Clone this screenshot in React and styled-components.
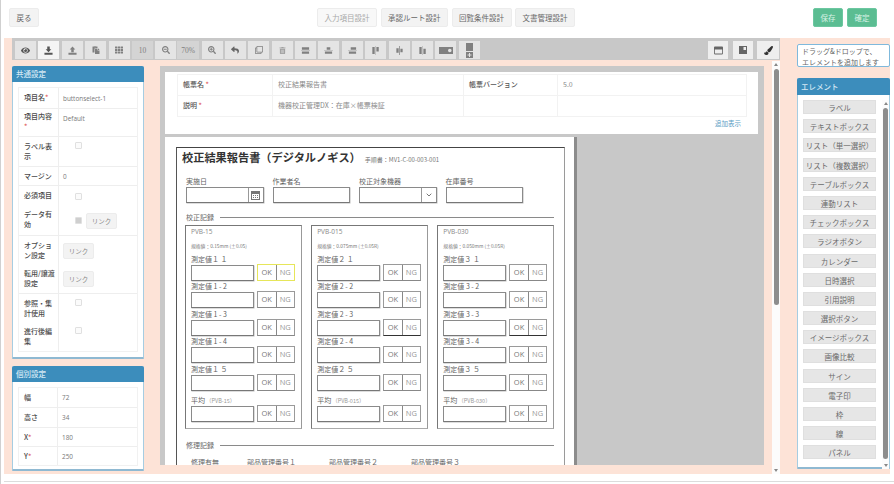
import React from 'react';
import styled, { createGlobalStyle } from 'styled-components';
import {
  FaEye, FaPaste, FaTh, FaSearchMinus, FaSearchPlus, FaReply, FaRegClone, FaTrashAlt,
  FaRegWindowMaximize, FaPaintBrush,
} from 'react-icons/fa';

const GlobalStyle = createGlobalStyle`
  html, body { margin: 0; padding: 0; background: #fff; }
  body { font-family: "Noto Sans CJK JP", "Open Sans", "Liberation Sans", sans-serif; color: #555; }
  * { box-sizing: border-box; }
`;

const Page = styled.div`
  position: relative;
  width: 894px;
  height: 484px;
  overflow: hidden;
  border-left: 1px solid #d0d0d0;
  padding-left: 3px;
  background: #fff;
  &::before {
    content: '';
    position: absolute;
    left: -1px;
    top: 237px;
    width: 1px;
    height: 66px;
    background: #c9a595;
  }
`;

const Header = styled.header`
  height: 38px;
  display: flex;
  align-items: flex-start;
  padding: 8px 17px 0 5px;
`;

const HeaderCenter = styled.div`
  display: flex;
  gap: 3.5px;
  margin-left: 278px;
`;

const HeaderRight = styled.div`
  display: flex;
  gap: 4px;
  margin-left: auto;
`;

const HeadButton = styled.button`
  height: 19px;
  min-width: 30px;
  padding: 0 6.5px;
  font: 7.5px/17px "Noto Sans CJK JP", sans-serif;
  color: ${p => (p.$disabled ? '#a9a9a9' : '#666')};
  background: ${p => (p.$disabled ? '#f8f8f8' : '#f3f3f3')};
  border: 1px solid #ececec;
  border-radius: 2px;
`;

const GreenButton = styled(HeadButton)`
  color: #d9f2e6;
  background: #5bbd92;
  border-color: #6cc7a0;
`;

const Workspace = styled.div`
  width: 886px;
  height: 436px;
  display: flex;
  padding-left: 8px;
  background: #fde3d7;
`;

const MainColumn = styled.div`
  width: 768px;
  display: flex;
  flex-direction: column;
`;

const Toolbar = styled.div`
  height: 22px;
  flex: none;
  display: flex;
  justify-content: space-between;
  padding: 3px 1px 0 3px;
  background: #c8c8c8;
`;

const ToolGroup = styled.div`
  display: flex;
  gap: ${p => p.$gap}px;
`;

const ToolButton = styled.button`
  width: ${p => (p.$wide ? '22px' : '21px')};
  height: 18px;
  padding: 0;
  display: flex;
  align-items: center;
  justify-content: center;
  font: 7.5px "Liberation Serif", serif;
  color: ${p => (p.$tone === 'active' ? '#555' : '#808080')};
  border: none;
  background: ${p => ({ active: '#f4f4f4', text: '#d4d4d4', plain: '#e4e4e4' }[p.$tone || 'plain'])};
  margin-left: ${p => (p.$wide ? '-1.6px' : '0')};
  svg { display: block; }
`;

const ToolLight = styled(ToolButton)`
  background: #eeeeee;
  width: ${p => p.$w || 20}px;
  color: #666;
`;

const BodyRow = styled.div`
  flex: 1;
  display: flex;
  min-height: 0;
  padding-top: 6px;
`;

const LeftColumn = styled.div`
  width: 132px;
  flex: none;
  display: flex;
  flex-direction: column;
  gap: 7px;
`;

const Panel = styled.section`
  background: #fff;
  border: 1px solid #a6cde2;
  border-bottom: 2px solid #8fb9d2;
  border-top: none;
  border-radius: 2px 2px 1px 1px;
  height: ${p => p.$h}px;
  flex: none;
`;

const PanelTitle = styled.h3`
  margin: 0 -1px;
  height: ${p => p.$h || 16}px;
  padding-left: 4px;
  background: #3c8dbc;
  color: #d4e8f4;
  font: 500 7.5px/${p => p.$h || 16}px "Noto Sans CJK JP", sans-serif;
  border-radius: 2px 2px 0 0;
`;

const PropTable = styled.div`
  margin: 5px 5px 0;
  border: 1px solid #f1f1f1;
`;

const PropRow = styled.div`
  display: flex;
  height: ${p => p.$h}px;
  border-top: ${p => (p.$line ? '1px solid #eeeeee' : 'none')};
`;

const PropName = styled.div`
  width: ${p => p.$w || 40}px;
  flex: none;
  padding: ${p => (p.$pad === undefined ? 5 : p.$pad)}px 3px 0 5px;
  font: 500 7px/9.5px "Noto Sans CJK JP", sans-serif;
  color: #4a4a4a;
  border-right: 1px solid #eeeeee;
  word-break: break-all;
`;

const PropValue = styled.div`
  flex: 1;
  display: flex;
  align-items: ${p => (p.$top ? 'flex-start' : 'center')};
  gap: 4px;
  padding: ${p => (p.$top ? '5px' : '0')} 0 0 4px;
  font: 6.4px/9px "Open Sans", "Noto Sans CJK JP", sans-serif;
  color: #777;
`;

const Required = styled.span`
  color: #e05a5a;
`;

const CheckBox = styled.span`
  width: 7px;
  height: 7px;
  margin-left: 12px;
  border: 1px solid #e0e0e0;
  border-radius: 1px;
  background: ${p => (p.$on ? '#cfcfcf' : '#fbfbfb')};
  flex: none;
`;

const LinkButton = styled.button`
  width: 31px;
  height: 16px;
  padding: 0;
  font: 6.5px "Noto Sans CJK JP", sans-serif;
  color: #888;
  background: #f3f3f3;
  border: 1px solid #ececec;
  border-radius: 2px;
`;

const Canvas = styled.div`
  width: 604px;
  margin-left: 16px;
  height: 399px;
  flex: none;
  overflow: hidden;
  padding: 6px 6px 0 5px;
  background: #c8c8c8;
`;

const FormCard = styled.div`
  height: 62px;
  padding: 2px 11px 0 12px;
  background: #fff;
  margin-bottom: 3px;
`;

const FormGrid = styled.div`
  display: grid;
  grid-template-columns: 95px 191px 94px 1fr;
  grid-template-rows: 21px 20px;
  border: 1px solid #f2f2f2;
`;

const FormCell = styled.div`
  display: flex;
  align-items: center;
  padding: 0 0 2px 5px;
  font: ${p => (p.$label ? 500 : 400)} 7px "Noto Sans CJK JP", sans-serif;
  color: ${p => (p.$label ? '#555' : '#8a8a8a')};
  border-right: ${p => (p.$end ? 'none' : '1px solid #f2f2f2')};
  border-bottom: ${p => (p.$top ? '1px solid #f2f2f2' : 'none')};
`;

const MoreLink = styled.div`
  text-align: right;
  padding: 1px 6px 0 0;
  font: 6.5px "Noto Sans CJK JP", sans-serif;
  color: #5b9dc4;
`;

const Sheet = styled.div`
  width: 412px;
  height: 340px;
  padding: 10px 9px 0 11px;
  background: #fff;
  border-right: 3px solid #8c8c8c;
`;

const DocPage = styled.div`
  width: 389px;
  height: 340px;
  padding: 0 10px 0 8px;
  border: 1px solid #9a9a9a;
  border-top-color: #444;
  border-left-color: #555;
`;

const DocHead = styled.div`
  height: 28px;
  display: flex;
  align-items: baseline;
  gap: 4px;
  margin-left: -3px;
`;

const DocTitle = styled.h1`
  margin: -1px 0 0;
  font: 700 11.2px/20px "Noto Sans CJK JP", sans-serif;
  color: #333;
`;

const DocNo = styled.span`
  font: 6px "Noto Sans CJK JP", sans-serif;
  color: #777;
`;

const FieldGrid = styled.div`
  display: grid;
  grid-template-columns: repeat(4, 77.5px);
  gap: 9px;
  padding-left: 1px;
`;

const FieldLabel = styled.div`
  height: 11px;
  font: 7px/11px "Noto Sans CJK JP", sans-serif;
  color: #5f5f5f;
  white-space: nowrap;
`;

const InputBox = styled.div`
  height: 16px;
  width: ${p => p.$w || '100%'};
  display: flex;
  justify-content: flex-end;
  border: 1px solid #8a8a8a;
  border-bottom-color: #777;
  box-shadow: 0.5px 0.5px 0 #bbb;
  background: #fff;
`;

const Addon = styled.div`
  width: 15px;
  display: flex;
  align-items: center;
  justify-content: center;
  border-left: 1px solid #999;
  color: #777;
`;

const Legend = styled.div`
  display: flex;
  align-items: center;
  gap: 6px;
  height: 10px;
  margin-top: ${p => p.$mt}px;
  padding-left: 1px;
  font: 7px/10px "Noto Sans CJK JP", sans-serif;
  color: #666;
  &::after {
    content: '';
    flex: 1;
    height: 1px;
    background: #8a8a8a;
  }
`;

const BoxGrid = styled.div`
  display: grid;
  grid-template-columns: repeat(3, 1fr);
  gap: 9.5px;
  margin-top: 3px;
`;

const MeasureBox = styled.div`
  height: 204px;
  padding: 0 0 0 5px;
  border: 1px solid #777;
  border-bottom-color: #aaa;
  border-right-color: #999;
`;

const BoxName = styled.div`
  height: 12px;
  font: 6.5px/12px "Open Sans", sans-serif;
  color: #888;
`;

const BoxSpec = styled.div`
  height: 8px;
  margin: 4px 0;
  font: 4.8px/8px "Noto Sans CJK JP", sans-serif;
  color: #777;
  white-space: nowrap;
`;

const MeasureRow = styled.div`
  height: 27.4px;
  margin-top: ${p => p.$mt || 0}px;
`;

const Small = styled.span`
  font-size: 5.5px;
  color: #999;
  margin-left: 1px;
`;

const MeasureControls = styled.div`
  display: flex;
  align-items: flex-start;
  gap: 3px;
`;

const JudgeGroup = styled.div`
  display: flex;
  width: 38px;
  height: 17px;
  margin-top: -1px;
  border: 1px solid ${p => (p.$tone === 'yellow' ? '#e6e65a' : '#9a9a9a')};
  border-bottom-color: ${p => (p.$tone === 'dark' ? '#333' : p.$tone === 'yellow' ? '#e6e65a' : '#888')};
`;

const JudgeCell = styled.div`
  flex: 1;
  text-align: center;
  font: 7.5px/15px "Open Sans", sans-serif;
  color: ${p => (p.$ng ? '#999' : '#777')};
  & + & { border-left: 1px solid #888; }
`;

const RepairRow = styled.div`
  display: grid;
  grid-template-columns: 56px 82px 82px 100px;
  margin-top: 7px;
  padding-left: 6px;
  font: 7px/10px "Noto Sans CJK JP", sans-serif;
  color: #666;
  white-space: nowrap;
`;

const ScrollTrack = styled.div`
  width: ${p => p.$w}px;
  flex: none;
  display: flex;
  flex-direction: column;
  align-items: center;
  background: #fcfcfc;
  margin-left: ${p => p.$ml || 0}px;
  margin-top: ${p => p.$mt || 0}px;
  padding: 2px 0 2px;
`;

const ScrollArrow = styled.div`
  width: 0;
  height: 0;
  flex: none;
  margin: 0 0 3px;
  border-left: 2.5px solid transparent;
  border-right: 2.5px solid transparent;
  border-bottom: 3px solid #888;
  ${p => p.$down && `
    margin: auto 0 0;
    border-bottom: none;
    border-top: 3px solid #888;
  `}
`;

const ScrollThumb = styled.div`
  width: ${p => p.$w}px;
  height: ${p => p.$h}px;
  flex: none;
  border-radius: 3px;
  background: #8d8d8d;
`;

const RightColumn = styled.aside`
  width: 93px;
  flex: none;
  margin-left: 17px;
  padding-top: 6px;
`;

const HintBox = styled.div`
  height: 23px;
  padding: 1px 0 0 4px;
  background: #fff;
  border: 1px solid #7fb9dc;
  border-radius: 2px;
  font: 7px/10.5px "Noto Sans CJK JP", sans-serif;
  color: #666;
  white-space: nowrap;
  margin-bottom: 11px;
`;

const ElementBody = styled.div`
  display: flex;
  height: 374px;
  padding: 5px 0 0 5px;
`;

const ElementList = styled.div`
  width: 73px;
  flex: none;
  display: flex;
  flex-direction: column;
  gap: 5.2px;
`;

const ElementItem = styled.div`
  height: 14px;
  text-align: center;
  font: 7.5px/13px "Noto Sans CJK JP", sans-serif;
  color: #6b6b6b;
  background: #e6e6e6;
  border: 1px solid #dfdfdf;
  white-space: nowrap;
  overflow: hidden;
`;

const Footer = styled.div`
  margin-top: 7px;
  border-top: 1px solid #dcdcdc;
`;

const Glyph = ({ children, w = 9, h = 9, vb = '0 0 10 10' }) => (
  <svg width={w} height={h} viewBox={vb} fill="currentColor">{children}</svg>
);

const toolIcons = {
  download: <Glyph><path d="M3.6 0.5h2.8v3h1.7L5 7 1.9 3.5h1.7zM0.5 7.6h9v2h-9z" /></Glyph>,
  upload: <Glyph><path d="M5 0.5l3.1 3.5H6.4v3H3.6V4H1.9zM0.5 7.6h9v2h-9z" /></Glyph>,
  alignTop: <Glyph><path d="M1 1.5h8v2.6H1zM1 6h8v2.6H1z" /><path d="M0 4.7h10v.7H0z" opacity=".5" /></Glyph>,
  alignMid: <Glyph><path d="M3 1.5h4v2.6H3zM1 6h8v2.6H1z" /><path d="M0 4.7h10v.7H0z" opacity=".5" /></Glyph>,
  alignBot: <Glyph><path d="M3 1.5h6v2.6H3zM1 6h8v2.6H1z" /><path d="M0 4.7h10v.7H0z" opacity=".5" /></Glyph>,
  alignLeft: <Glyph><path d="M1.5 1h2.6v8H1.5zM6 1h2.6v5H6z" /><path d="M4.7 0h.7v10h-.7z" opacity=".5" /></Glyph>,
  alignCenter: <Glyph><path d="M1.5 2.5h2.6v5H1.5zM6 3h2.5v4H6z" /><path d="M4.6 0h.8v10h-.8z" /></Glyph>,
  alignRight: <Glyph><path d="M1.5 1h2.6v8H1.5zM6 3h2.6v6H6z" /><path d="M4.7 0h.7v10h-.7z" opacity=".5" /></Glyph>,
  toggle: <Glyph w={14} h={7} vb="0 0 14 7"><path d="M0 0h14v7H0zM9 3.5a1.8 1.8 0 1 0 3.6 0 1.8 1.8 0 0 0-3.6 0z" fillRule="evenodd" /></Glyph>,
  tall: <Glyph w={7} h={15} vb="0 0 7 15"><path d="M0 0h7v8H0zM0 9h7v6H0zM3 10v1.5H1.5v1H3V14h1v-1.5h1.5v-1H4V10z" fillRule="evenodd" /></Glyph>,
  image: <Glyph w={8} h={8} vb="0 0 8 8"><path d="M0 0h8v8H0zM4.5 1v3H7V1z" fillRule="evenodd" /></Glyph>,
  calendar: <Glyph vb="0 0 9 9"><path d="M0 0h9v9H0zM1 3v5h7V3zM2 4h1v1H2zM4 4h1v1H4zM6 4h1v1H6zM2 6h1v1H2zM4 6h1v1H4zM6 6h1v1H6z" fillRule="evenodd" /></Glyph>,
  chevron: <svg width="6" height="4" viewBox="0 0 6 4" fill="none" stroke="currentColor"><path d="M.7.7L3 3l2.3-2.3" /></svg>,
};

const leftTools = [
  { key: 'eye', icon: <FaEye size={9} color="#555" /> },
  { key: 'down', icon: toolIcons.download, tone: 'active' },
  { key: 'up', icon: toolIcons.upload },
  { key: 'paste', icon: <FaPaste size={8} /> },
  { key: 'grid', icon: <FaTh size={8} /> },
  { key: 'size', icon: '10', tone: 'text' },
  { key: 'minus', icon: <FaSearchMinus size={8} /> },
  { key: 'zoom', icon: '70%', tone: 'text', wide: true },
  { key: 'plus', icon: <FaSearchPlus size={8} /> },
  { key: 'undo', icon: <FaReply size={8} color="#666" /> },
  { key: 'clone', icon: <FaRegClone size={8} /> },
  { key: 'trash', icon: <FaTrashAlt size={7} color="#a0a0a0" /> },
  { key: 'at', icon: toolIcons.alignTop },
  { key: 'am', icon: toolIcons.alignMid },
  { key: 'ab', icon: toolIcons.alignBot },
  { key: 'al', icon: toolIcons.alignLeft },
  { key: 'ac', icon: toolIcons.alignCenter },
  { key: 'ar', icon: toolIcons.alignRight },
  { key: 'toggle', icon: toolIcons.toggle },
  { key: 'tall', icon: toolIcons.tall },
];

const boxes = [
  { no: 1, name: 'PVB-15', spec: '規格値：0.15mm (±0.05)', tones: ['yellow', '', '', '', ''] },
  { no: 2, name: 'PVB-015', spec: '規格値：0.075mm (±0.05R)', tones: ['', '', 'dark', '', ''] },
  { no: 3, name: 'PVB-030', spec: '規格値：0.050mm (±0.05R)', tones: ['', '', 'dark', '', ''] },
];

const elements = [
  'ラベル', 'テキストボックス', 'リスト（単一選択）', 'リスト（複数選択）', 'テーブルボックス',
  '連動リスト', 'チェックボックス', 'ラジオボタン', 'カレンダー', '日時選択', '引用説明', '選択ボタン',
  'イメージボックス', '画像比較', 'サイン', '電子印', '枠', '線', 'パネル',
];

const measureLabel = (no, i) => (i === 0 || i === 4
  ? `測定値${'１２３'[no - 1]} ${'１５'[i === 0 ? 0 : 1]}`
  : `測定値 ${no} - ${i + 1}`);

const Judge = ({ tone }) => (
  <JudgeGroup $tone={tone}>
    <JudgeCell>OK</JudgeCell>
    <JudgeCell $ng>NG</JudgeCell>
  </JudgeGroup>
);

const Measure = ({ box }) => (
  <MeasureBox>
    <BoxName>{box.name}</BoxName>
    <BoxSpec>{box.spec}</BoxSpec>
    {box.tones.map((tone, i) => (
      <MeasureRow key={i}>
        <FieldLabel>{measureLabel(box.no, i)}</FieldLabel>
        <MeasureControls>
          <InputBox $w="63px" />
          <Judge tone={tone} />
        </MeasureControls>
      </MeasureRow>
    ))}
    <MeasureRow $mt={4}>
      <FieldLabel>平均<Small>（{box.name}）</Small></FieldLabel>
      <MeasureControls>
        <InputBox $w="63px" />
        <Judge />
      </MeasureControls>
    </MeasureRow>
  </MeasureBox>
);

const App = () => (
  <Page>
    <GlobalStyle />
    <Header>
      <HeadButton>戻る</HeadButton>
      <HeaderCenter>
        <HeadButton $disabled>入力項目設計</HeadButton>
        <HeadButton>承認ルート設計</HeadButton>
        <HeadButton>回覧条件設計</HeadButton>
        <HeadButton>文書管理設計</HeadButton>
      </HeaderCenter>
      <HeaderRight>
        <GreenButton>保存</GreenButton>
        <GreenButton>確定</GreenButton>
      </HeaderRight>
    </Header>
    <Workspace>
      <MainColumn>
        <Toolbar>
          <ToolGroup $gap={2.4}>
            {leftTools.map(t => (
              <ToolButton key={t.key} $tone={t.tone} $wide={t.wide}>{t.icon}</ToolButton>
            ))}
          </ToolGroup>
          <ToolGroup $gap={4.5}>
            <ToolLight><FaRegWindowMaximize size={9} /></ToolLight>
            <ToolLight>{toolIcons.image}</ToolLight>
            <ToolLight $w={22}><FaPaintBrush size={9} color="#333" /></ToolLight>
          </ToolGroup>
        </Toolbar>
        <BodyRow>
          <LeftColumn>
            <Panel $h={293}>
              <PanelTitle>共通設定</PanelTitle>
              <PropTable>
                <PropRow $h={20}><PropName>項目名<Required>*</Required></PropName><PropValue>buttonselect-1</PropValue></PropRow>
                <PropRow $h={28} $line><PropName $pad={3}>項目内容<Required>*</Required></PropName><PropValue $top>Default</PropValue></PropRow>
                <PropRow $h={30} $line><PropName>ラベル表示</PropName><PropValue $top><CheckBox /></PropValue></PropRow>
                <PropRow $h={19} $line><PropName>マージン</PropName><PropValue>0</PropValue></PropRow>
                <PropRow $h={21} $line><PropName>必須項目</PropName><PropValue><CheckBox /></PropValue></PropRow>
                <PropRow $h={29}><PropName $pad={4}>データ有効</PropName><PropValue><CheckBox $on /><LinkButton>リンク</LinkButton></PropValue></PropRow>
                <PropRow $h={30} $line><PropName>オプショ<br />ン設定</PropName><PropValue><LinkButton>リンク</LinkButton></PropValue></PropRow>
                <PropRow $h={28}><PropName $pad={4}>転用/譲渡設定</PropName><PropValue><LinkButton>リンク</LinkButton></PropValue></PropRow>
                <PropRow $h={29} $line><PropName>参照・集計使用</PropName><PropValue $top><CheckBox /></PropValue></PropRow>
                <PropRow $h={29}><PropName>進行後編集</PropName><PropValue $top><CheckBox /></PropValue></PropRow>
              </PropTable>
            </Panel>
            <Panel $h={105}>
              <PanelTitle>個別設定</PanelTitle>
              <PropTable>
                <PropRow $h={19}><PropName $w={39}>幅</PropName><PropValue>72</PropValue></PropRow>
                <PropRow $h={20} $line><PropName $w={39}>高さ</PropName><PropValue>34</PropValue></PropRow>
                <PropRow $h={19} $line><PropName $w={39}>X<Required>*</Required></PropName><PropValue>180</PropValue></PropRow>
                <PropRow $h={19} $line><PropName $w={39}>Y<Required>*</Required></PropName><PropValue>250</PropValue></PropRow>
              </PropTable>
            </Panel>
          </LeftColumn>
          <Canvas>
            <FormCard>
              <FormGrid>
                <FormCell $label $top>帳票名<Required>&nbsp;*</Required></FormCell>
                <FormCell $top>校正結果報告書</FormCell>
                <FormCell $label $top>帳票バージョン</FormCell>
                <FormCell $end $top>5.0</FormCell>
                <FormCell $label>説明<Required>&nbsp;*</Required></FormCell>
                <FormCell>機器校正管理DX：在庫×帳票検証</FormCell>
                <FormCell />
                <FormCell $end />
              </FormGrid>
              <MoreLink>追加表示</MoreLink>
            </FormCard>
            <Sheet>
              <DocPage>
                <DocHead>
                  <DocTitle>校正結果報告書（デジタルノギス）</DocTitle>
                  <DocNo>手順書：MV1-C-00-003-001</DocNo>
                </DocHead>
                <FieldGrid>
                  <div>
                    <FieldLabel>実施日</FieldLabel>
                    <InputBox><Addon>{toolIcons.calendar}</Addon></InputBox>
                  </div>
                  <div>
                    <FieldLabel>作業者名</FieldLabel>
                    <InputBox />
                  </div>
                  <div>
                    <FieldLabel>校正対象機器</FieldLabel>
                    <InputBox><Addon>{toolIcons.chevron}</Addon></InputBox>
                  </div>
                  <div>
                    <FieldLabel>在庫番号</FieldLabel>
                    <InputBox />
                  </div>
                </FieldGrid>
                <Legend $mt={9}>校正記録</Legend>
                <BoxGrid>
                  {boxes.map(box => <Measure key={box.no} box={box} />)}
                </BoxGrid>
                <Legend $mt={11}>修理記録</Legend>
                <RepairRow>
                  <span>修理有無</span>
                  <span>部品管理番号１</span>
                  <span>部品管理番号２</span>
                  <span>部品管理番号３</span>
                </RepairRow>
              </DocPage>
            </Sheet>
          </Canvas>
          <ScrollTrack $w={8} $ml={8} $mt={-5}>
            <ScrollArrow />
            <ScrollThumb $w={5} $h={236} />
            <ScrollArrow $down />
          </ScrollTrack>
        </BodyRow>
      </MainColumn>
      <RightColumn>
        <HintBox>
          ドラッグ&ドロップで、<br />
          エレメントを追加します
        </HintBox>
        <Panel $h={391}>
          <PanelTitle $h={17}>エレメント</PanelTitle>
          <ElementBody>
            <ElementList>
              {elements.map(name => <ElementItem key={name}>{name}</ElementItem>)}
            </ElementList>
            <ScrollTrack $w={7} $ml={6}>
              <ScrollArrow />
              <ScrollThumb $w={5} $h={351} />
              <ScrollArrow $down />
            </ScrollTrack>
          </ElementBody>
        </Panel>
      </RightColumn>
    </Workspace>
    <Footer />
  </Page>
);

export default App;
